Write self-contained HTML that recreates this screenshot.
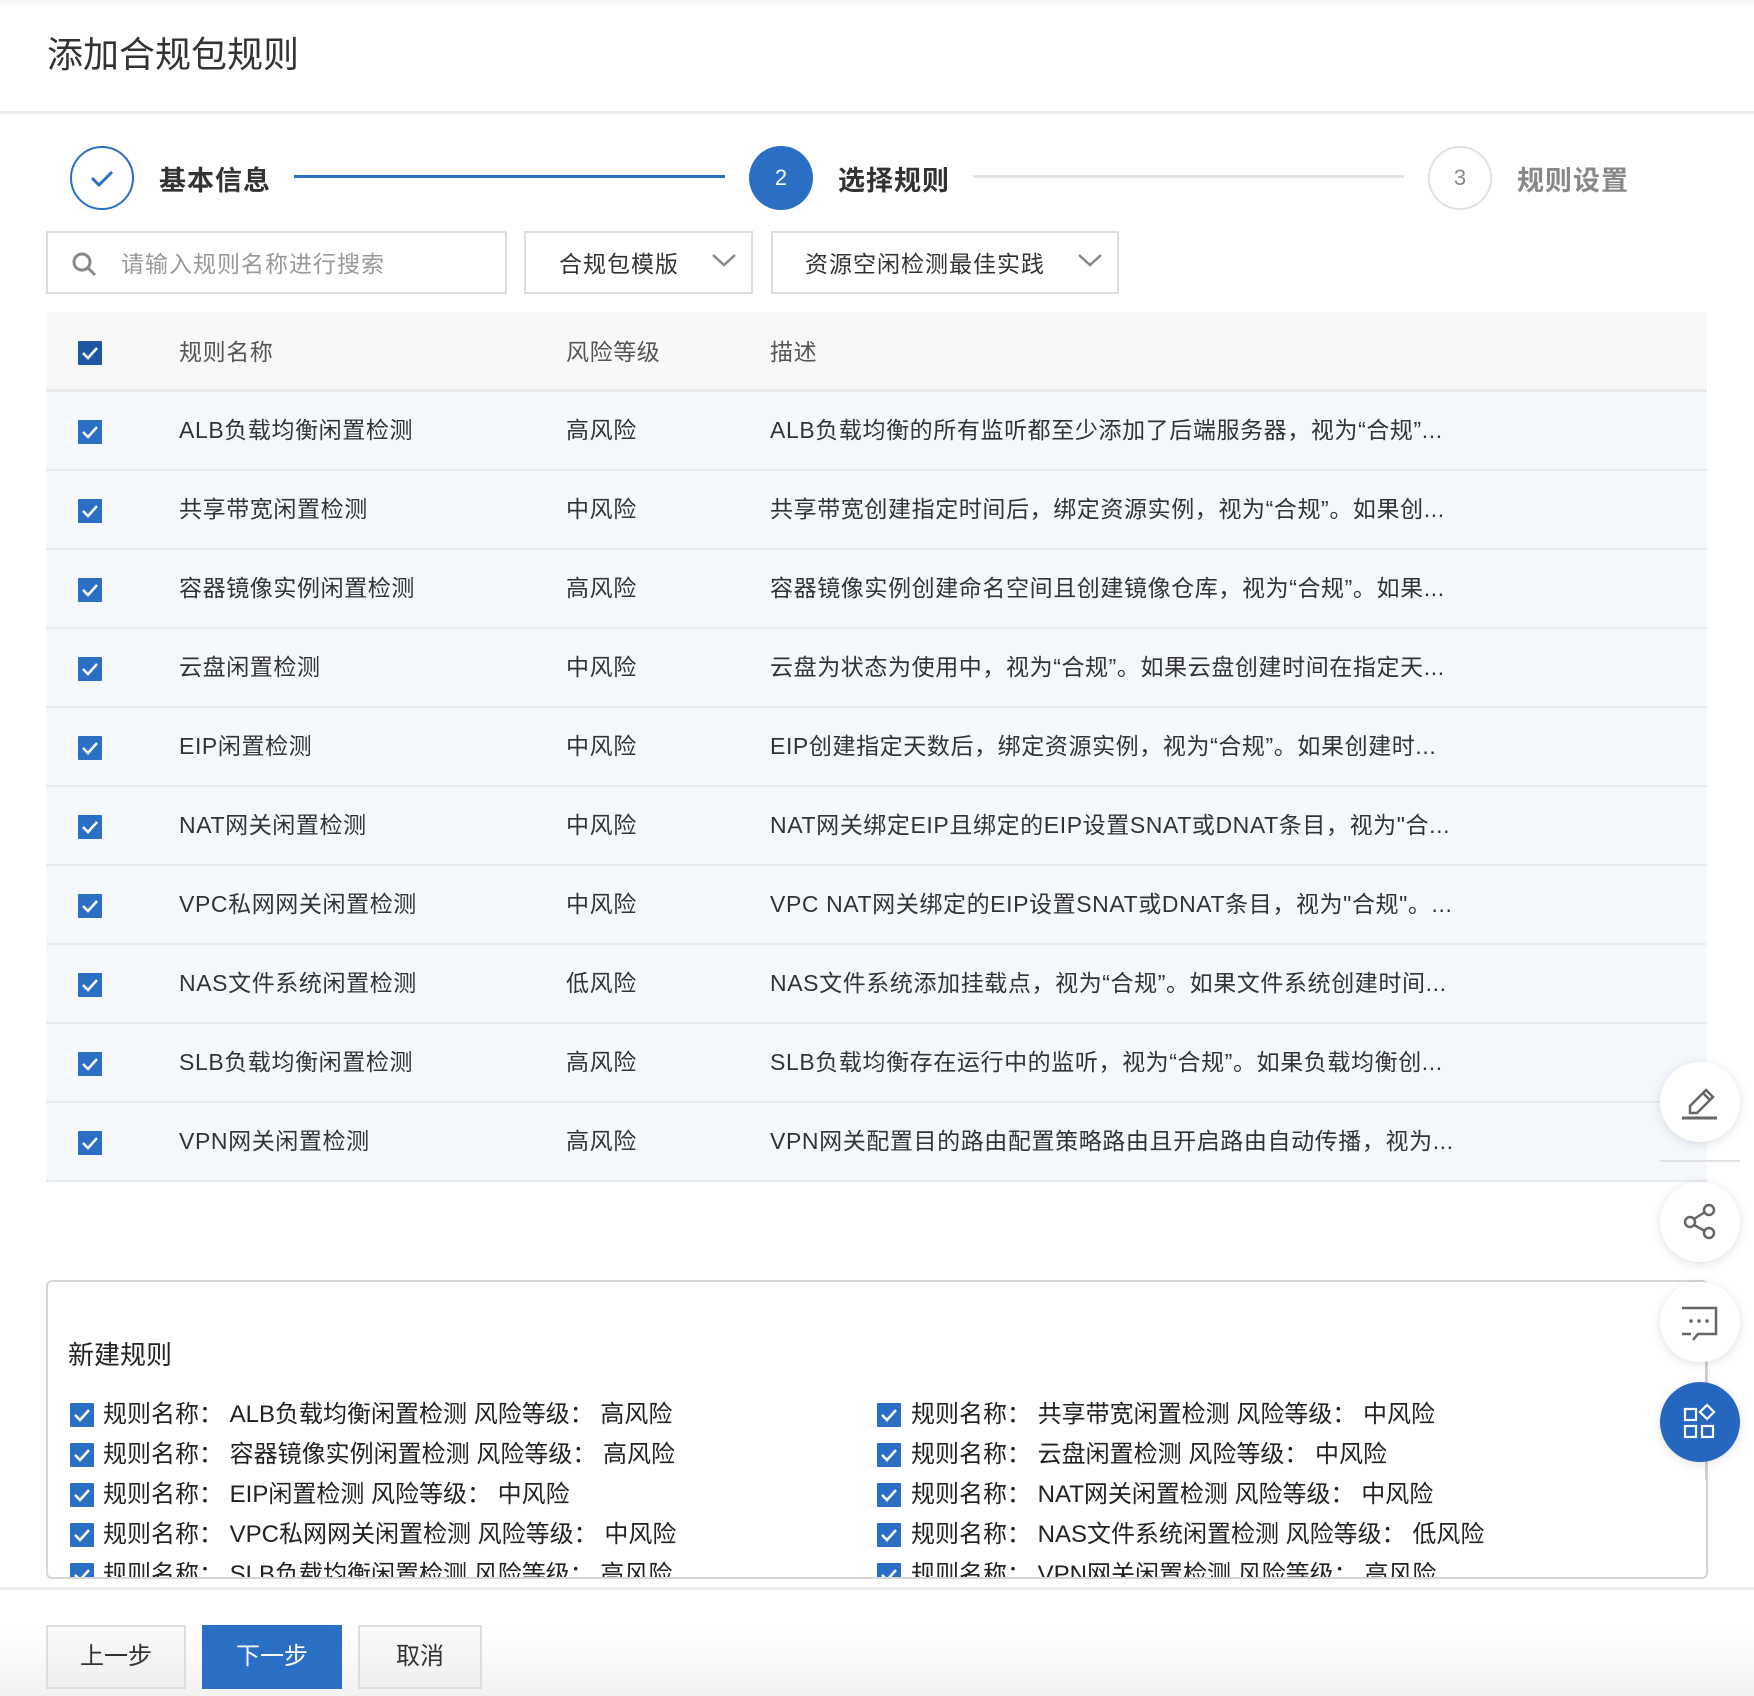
<!DOCTYPE html>
<html><head><meta charset="utf-8"><style>
*{margin:0;padding:0;box-sizing:border-box}
body{width:1754px;height:1696px;background:#fff;position:relative;overflow:hidden;font-family:"Liberation Sans","Noto Sans CJK SC",sans-serif;color:#333}
.a{position:absolute;white-space:nowrap}
.cb{position:absolute;width:24px;height:24px;background:#2b6fc4;border-radius:1px}
.cb svg{position:absolute;left:0;top:0}
.row{position:absolute;left:46px;width:1661px;height:79px;background:#f4f8fc;border-bottom:2px solid #e8ebee}
.row .t{position:absolute;top:0;line-height:77px;font-size:23px;letter-spacing:0.6px;color:#333;white-space:nowrap}
.it{position:absolute;font-size:24px;line-height:30px;color:#222;white-space:nowrap}
.fab{position:absolute;width:80px;height:80px;border-radius:50%;background:#fff;box-shadow:0 2px 10px rgba(0,0,0,.12)}
.btn{position:absolute;top:1625px;height:64px;border:2px solid #ddd;background:linear-gradient(#fafafa,#efefef);font-size:24px;line-height:60px;text-align:center;color:#333}
</style></head><body>
<div class="a" style="left:0;top:0;width:1754px;height:8px;background:linear-gradient(#f3f3f3,#fff)"></div>
<div class="a" style="left:47px;top:31px;font-size:36px;line-height:48px;color:#333">添加合规包规则</div>
<div class="a" style="left:0;top:111px;width:1754px;height:3px;background:#ececec"></div>

<div class="a" style="left:70px;top:146px;width:64px;height:64px;border:2px solid #2b6fc4;border-radius:50%"></div>
<svg class="a" style="left:86px;top:162px" width="32" height="32" viewBox="0 0 32 32"><path d="M6 16 L13 23 L26 10" fill="none" stroke="#2b6fc4" stroke-width="3"/></svg>
<div class="a" style="left:159px;top:164px;font-size:27px;font-weight:bold;line-height:34px;letter-spacing:1px;color:#333">基本信息</div>
<div class="a" style="left:294px;top:175px;width:431px;height:3px;background:#2b6fc4"></div>
<div class="a" style="left:749px;top:146px;width:64px;height:64px;background:#2b6fc4;border-radius:50%;color:#fff;font-size:22px;line-height:64px;text-align:center">2</div>
<div class="a" style="left:838px;top:164px;font-size:27px;font-weight:bold;line-height:34px;letter-spacing:1px;color:#333">选择规则</div>
<div class="a" style="left:973px;top:175px;width:431px;height:3px;background:#e2e2e2"></div>
<div class="a" style="left:1428px;top:146px;width:64px;height:64px;border:2px solid #e2e2e2;border-radius:50%;color:#888;font-size:22px;line-height:60px;text-align:center">3</div>
<div class="a" style="left:1517px;top:164px;font-size:27px;font-weight:bold;line-height:34px;letter-spacing:1px;color:#888">规则设置</div>

<div class="a" style="left:46px;top:231px;width:461px;height:63px;border:2px solid #ddd"></div>
<svg class="a" style="left:70px;top:250px" width="28" height="28" viewBox="0 0 28 28"><circle cx="12" cy="12" r="8" fill="none" stroke="#888" stroke-width="3"/><path d="M18 18 L25 25" stroke="#888" stroke-width="3"/></svg>
<div class="a" style="left:121px;top:248px;font-size:23px;line-height:32px;letter-spacing:1px;color:#999">请输入规则名称进行搜索</div>
<div class="a" style="left:524px;top:231px;width:229px;height:63px;border:2px solid #ddd"></div>
<div class="a" style="left:559px;top:248px;font-size:23px;line-height:32px;letter-spacing:1px;color:#333">合规包模版</div>
<svg class="a" style="left:711px;top:252px" width="26" height="16" viewBox="0 0 26 16"><path d="M2 3 L13 13 L24 3" fill="none" stroke="#888" stroke-width="2.5"/></svg>
<div class="a" style="left:771px;top:231px;width:348px;height:63px;border:2px solid #ddd"></div>
<div class="a" style="left:805px;top:248px;font-size:23px;line-height:32px;letter-spacing:1px;color:#333">资源空闲检测最佳实践</div>
<svg class="a" style="left:1077px;top:252px" width="26" height="16" viewBox="0 0 26 16"><path d="M2 3 L13 13 L24 3" fill="none" stroke="#888" stroke-width="2.5"/></svg>

<div class="a" style="left:46px;top:312px;width:1661px;height:80px;background:#f8f8f8;border-bottom:3px solid #e8ebee"></div>
<div class="cb" style="left:78px;top:341px;background:#1e56a0"><svg width="24" height="24"><path d="M5 12 L10 17 L19 7" fill="none" stroke="#fff" stroke-width="2.5"/></svg></div>
<div class="a" style="left:179px;top:336px;font-size:23px;line-height:32px;letter-spacing:0.6px;color:#555">规则名称</div>
<div class="a" style="left:566px;top:336px;font-size:23px;line-height:32px;letter-spacing:0.6px;color:#555">风险等级</div>
<div class="a" style="left:770px;top:336px;font-size:23px;line-height:32px;letter-spacing:0.6px;color:#555">描述</div>

<div class="row" style="top:392px"><div class="cb" style="left:32px;top:28px"><svg width="24" height="24"><path d="M5 12 L10 17 L19 7" fill="none" stroke="#fff" stroke-width="2.5"/></svg></div><div class="t" style="left:133px">ALB负载均衡闲置检测</div><div class="t" style="left:520px">高风险</div><div class="t" style="left:724px">ALB负载均衡的所有监听都至少添加了后端服务器，视为“合规”...</div></div>
<div class="row" style="top:471px"><div class="cb" style="left:32px;top:28px"><svg width="24" height="24"><path d="M5 12 L10 17 L19 7" fill="none" stroke="#fff" stroke-width="2.5"/></svg></div><div class="t" style="left:133px">共享带宽闲置检测</div><div class="t" style="left:520px">中风险</div><div class="t" style="left:724px">共享带宽创建指定时间后，绑定资源实例，视为“合规”。如果创...</div></div>
<div class="row" style="top:550px"><div class="cb" style="left:32px;top:28px"><svg width="24" height="24"><path d="M5 12 L10 17 L19 7" fill="none" stroke="#fff" stroke-width="2.5"/></svg></div><div class="t" style="left:133px">容器镜像实例闲置检测</div><div class="t" style="left:520px">高风险</div><div class="t" style="left:724px">容器镜像实例创建命名空间且创建镜像仓库，视为“合规”。如果...</div></div>
<div class="row" style="top:629px"><div class="cb" style="left:32px;top:28px"><svg width="24" height="24"><path d="M5 12 L10 17 L19 7" fill="none" stroke="#fff" stroke-width="2.5"/></svg></div><div class="t" style="left:133px">云盘闲置检测</div><div class="t" style="left:520px">中风险</div><div class="t" style="left:724px">云盘为状态为使用中，视为“合规”。如果云盘创建时间在指定天...</div></div>
<div class="row" style="top:708px"><div class="cb" style="left:32px;top:28px"><svg width="24" height="24"><path d="M5 12 L10 17 L19 7" fill="none" stroke="#fff" stroke-width="2.5"/></svg></div><div class="t" style="left:133px">EIP闲置检测</div><div class="t" style="left:520px">中风险</div><div class="t" style="left:724px">EIP创建指定天数后，绑定资源实例，视为“合规”。如果创建时...</div></div>
<div class="row" style="top:787px"><div class="cb" style="left:32px;top:28px"><svg width="24" height="24"><path d="M5 12 L10 17 L19 7" fill="none" stroke="#fff" stroke-width="2.5"/></svg></div><div class="t" style="left:133px">NAT网关闲置检测</div><div class="t" style="left:520px">中风险</div><div class="t" style="left:724px">NAT网关绑定EIP且绑定的EIP设置SNAT或DNAT条目，视为"合...</div></div>
<div class="row" style="top:866px"><div class="cb" style="left:32px;top:28px"><svg width="24" height="24"><path d="M5 12 L10 17 L19 7" fill="none" stroke="#fff" stroke-width="2.5"/></svg></div><div class="t" style="left:133px">VPC私网网关闲置检测</div><div class="t" style="left:520px">中风险</div><div class="t" style="left:724px">VPC NAT网关绑定的EIP设置SNAT或DNAT条目，视为"合规"。...</div></div>
<div class="row" style="top:945px"><div class="cb" style="left:32px;top:28px"><svg width="24" height="24"><path d="M5 12 L10 17 L19 7" fill="none" stroke="#fff" stroke-width="2.5"/></svg></div><div class="t" style="left:133px">NAS文件系统闲置检测</div><div class="t" style="left:520px">低风险</div><div class="t" style="left:724px">NAS文件系统添加挂载点，视为“合规”。如果文件系统创建时间...</div></div>
<div class="row" style="top:1024px"><div class="cb" style="left:32px;top:28px"><svg width="24" height="24"><path d="M5 12 L10 17 L19 7" fill="none" stroke="#fff" stroke-width="2.5"/></svg></div><div class="t" style="left:133px">SLB负载均衡闲置检测</div><div class="t" style="left:520px">高风险</div><div class="t" style="left:724px">SLB负载均衡存在运行中的监听，视为“合规”。如果负载均衡创...</div></div>
<div class="row" style="top:1103px"><div class="cb" style="left:32px;top:28px"><svg width="24" height="24"><path d="M5 12 L10 17 L19 7" fill="none" stroke="#fff" stroke-width="2.5"/></svg></div><div class="t" style="left:133px">VPN网关闲置检测</div><div class="t" style="left:520px">高风险</div><div class="t" style="left:724px">VPN网关配置目的路由配置策略路由且开启路由自动传播，视为...</div></div>

<div class="a" style="left:46px;top:1280px;width:1662px;height:299px;border:2px solid #d6d6d6;border-radius:6px;overflow:hidden">
<div class="a" style="left:20px;top:56px;font-size:26px;line-height:34px;color:#222">新建规则</div>
<div class="cb" style="left:22px;top:121px"><svg width="24" height="24"><path d="M5 12 L10 17 L19 7" fill="none" stroke="#fff" stroke-width="2.5"/></svg></div><div class="it" style="left:55px;top:118px">规则名称：&nbsp;ALB负载均衡闲置检测 风险等级：&nbsp;高风险</div>
<div class="cb" style="left:22px;top:161px"><svg width="24" height="24"><path d="M5 12 L10 17 L19 7" fill="none" stroke="#fff" stroke-width="2.5"/></svg></div><div class="it" style="left:55px;top:158px">规则名称：&nbsp;容器镜像实例闲置检测 风险等级：&nbsp;高风险</div>
<div class="cb" style="left:22px;top:201px"><svg width="24" height="24"><path d="M5 12 L10 17 L19 7" fill="none" stroke="#fff" stroke-width="2.5"/></svg></div><div class="it" style="left:55px;top:198px">规则名称：&nbsp;EIP闲置检测 风险等级：&nbsp;中风险</div>
<div class="cb" style="left:22px;top:241px"><svg width="24" height="24"><path d="M5 12 L10 17 L19 7" fill="none" stroke="#fff" stroke-width="2.5"/></svg></div><div class="it" style="left:55px;top:238px">规则名称：&nbsp;VPC私网网关闲置检测 风险等级：&nbsp;中风险</div>
<div class="cb" style="left:22px;top:281px"><svg width="24" height="24"><path d="M5 12 L10 17 L19 7" fill="none" stroke="#fff" stroke-width="2.5"/></svg></div><div class="it" style="left:55px;top:278px">规则名称：&nbsp;SLB负载均衡闲置检测 风险等级：&nbsp;高风险</div>
<div class="cb" style="left:829px;top:121px"><svg width="24" height="24"><path d="M5 12 L10 17 L19 7" fill="none" stroke="#fff" stroke-width="2.5"/></svg></div><div class="it" style="left:863px;top:118px">规则名称：&nbsp;共享带宽闲置检测 风险等级：&nbsp;中风险</div>
<div class="cb" style="left:829px;top:161px"><svg width="24" height="24"><path d="M5 12 L10 17 L19 7" fill="none" stroke="#fff" stroke-width="2.5"/></svg></div><div class="it" style="left:863px;top:158px">规则名称：&nbsp;云盘闲置检测 风险等级：&nbsp;中风险</div>
<div class="cb" style="left:829px;top:201px"><svg width="24" height="24"><path d="M5 12 L10 17 L19 7" fill="none" stroke="#fff" stroke-width="2.5"/></svg></div><div class="it" style="left:863px;top:198px">规则名称：&nbsp;NAT网关闲置检测 风险等级：&nbsp;中风险</div>
<div class="cb" style="left:829px;top:241px"><svg width="24" height="24"><path d="M5 12 L10 17 L19 7" fill="none" stroke="#fff" stroke-width="2.5"/></svg></div><div class="it" style="left:863px;top:238px">规则名称：&nbsp;NAS文件系统闲置检测 风险等级：&nbsp;低风险</div>
<div class="cb" style="left:829px;top:281px"><svg width="24" height="24"><path d="M5 12 L10 17 L19 7" fill="none" stroke="#fff" stroke-width="2.5"/></svg></div><div class="it" style="left:863px;top:278px">规则名称：&nbsp;VPN网关闲置检测 风险等级：&nbsp;高风险</div>
</div>

<div class="a" style="left:0;top:1587px;width:1754px;height:3px;background:#ececec"></div>
<div class="a" style="left:0;top:1630px;width:1754px;height:66px;background:linear-gradient(#fff,#f2f2f2)"></div>
<div class="btn" style="left:46px;width:140px">上一步</div>
<div class="btn" style="left:202px;width:140px;background:#2b6fc4;border-color:#2b6fc4;color:#fff">下一步</div>
<div class="btn" style="left:358px;width:124px">取消</div>

<div class="a" style="left:1660px;top:1160px;width:80px;height:2px;background:#e0e0e0"></div>
<div class="a" style="left:1705px;top:1360px;width:2px;height:120px;background:#ccc"></div>
<div class="fab" style="left:1660px;top:1062px"><svg width="80" height="80" viewBox="0 0 80 80"><path d="M30 44 L46 28 L53 35 L37 51 L30 51 Z M43 31 L50 38" fill="none" stroke="#666" stroke-width="2.5"/><path d="M22 56 L57 56" stroke="#666" stroke-width="3"/></svg></div>
<div class="fab" style="left:1660px;top:1182px"><svg width="80" height="80" viewBox="0 0 80 80"><circle cx="49" cy="28" r="5" fill="none" stroke="#666" stroke-width="2.5"/><circle cx="30" cy="40" r="5" fill="none" stroke="#666" stroke-width="2.5"/><circle cx="49" cy="51" r="5" fill="none" stroke="#666" stroke-width="2.5"/><path d="M34 37 L45 30 M34 43 L45 49" stroke="#666" stroke-width="2.5"/></svg></div>
<div class="fab" style="left:1660px;top:1282px"><svg width="80" height="80" viewBox="0 0 80 80"><path d="M22 26 L56 26 L56 52 L38 52 L33 58 M31 52 L22 52 Z" fill="none" stroke="#666" stroke-width="2.5"/><circle cx="31" cy="39" r="1.8" fill="#666"/><circle cx="39" cy="39" r="1.8" fill="#666"/><circle cx="47" cy="39" r="1.8" fill="#666"/></svg></div>
<div class="fab" style="left:1660px;top:1382px;background:#2566bf"><svg width="80" height="80" viewBox="0 0 80 80"><rect x="25" y="27" width="11" height="11" fill="none" stroke="#fff" stroke-width="2.2"/><rect x="25" y="44" width="11" height="11" fill="none" stroke="#fff" stroke-width="2.2"/><rect x="42" y="44" width="11" height="11" fill="none" stroke="#fff" stroke-width="2.2"/><path d="M47 23 L54 30 L47 37 L40 30 Z" fill="none" stroke="#fff" stroke-width="2.2"/></svg></div>
</body></html>
